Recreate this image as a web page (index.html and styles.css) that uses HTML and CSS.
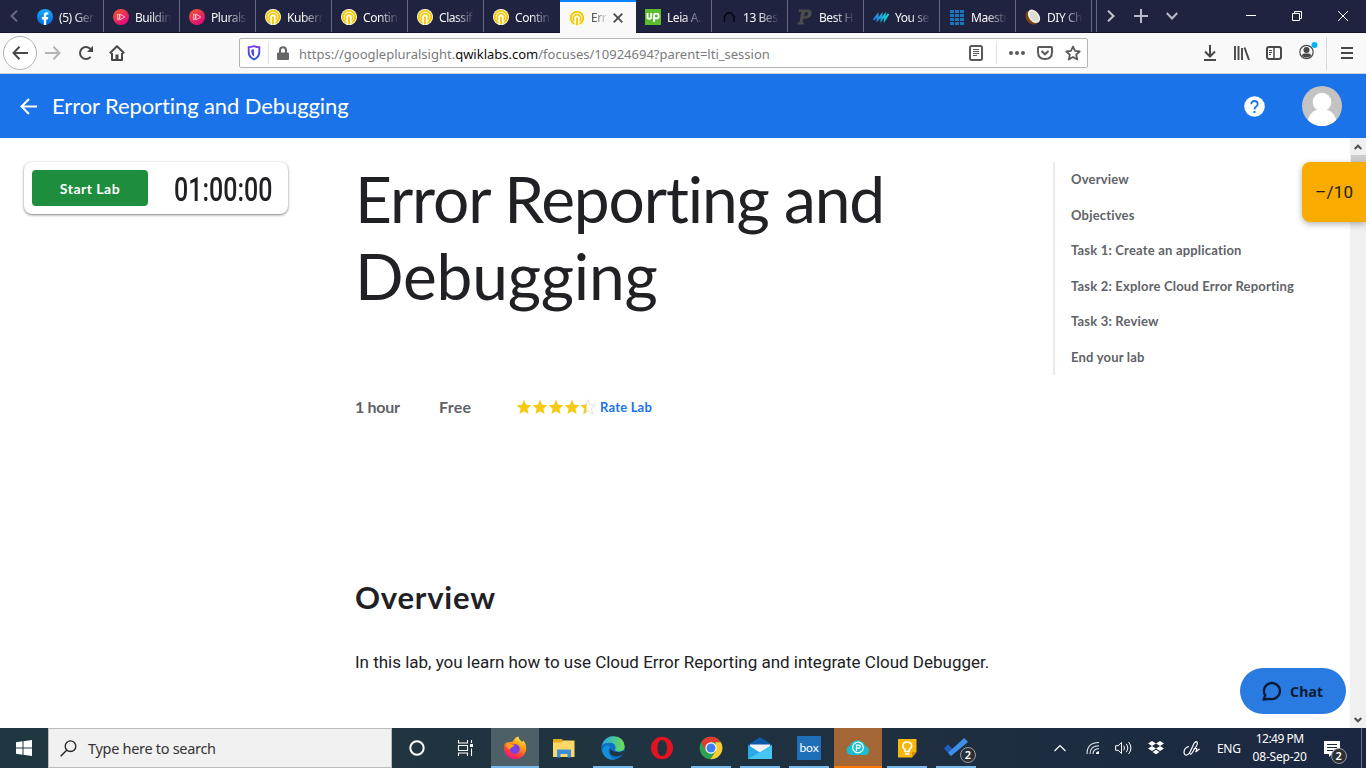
FILE: index.html
```html
<!DOCTYPE html>
<html lang="en">
<head>
<meta charset="utf-8">
<title>Error Reporting and Debugging</title>
<link rel="stylesheet" href="styles.css">
</head>
<body>
<svg class="defs" width="0" height="0">
  <symbol id="qwik" viewBox="0 0 16 16">
    <circle cx="8" cy="8" r="8" fill="#fff"/>
    <circle cx="8" cy="8" r="6.2" fill="none" stroke="#f5ca13" stroke-width="2.1"/>
    <path d="M5.700 11.200a3.700 3.700 0 1 1 4.600 0" fill="none" stroke="#f5ca13" stroke-width="1.800"/>
    <path d="M6.200 16V9.500M9.800 16V9.500" stroke="#fff" stroke-width="1.200"/>
    <path d="M8 7.400v7.800" stroke="#f5ca13" stroke-width="2"/>
  </symbol>
  <symbol id="plural" viewBox="0 0 16 16">
    <circle cx="8" cy="8" r="8" fill="url(#pg)"/>
    <path d="M6.800 5l5 3-5 3zM4.600 5.200v5.600l2-1.200V6.400z" fill="none" stroke="#fff" stroke-opacity=".75" stroke-width=".9"/>
  </symbol>
  <symbol id="star" viewBox="0 0 16 16"><path d="M8 .8l2.100 5 5.300.4-4 3.500 1.200 5.300L8 12.200 3.400 15l1.200-5.300-4-3.500 5.300-.4z"/></symbol>
  <defs>
    <linearGradient id="pg" x1="0" y1="0" x2=".7" y2="1"><stop offset="0" stop-color="#f15b2a"/><stop offset="1" stop-color="#e5087e"/></linearGradient>
    <linearGradient id="fb" x1="0" y1="0" x2="0" y2="1"><stop offset="0" stop-color="#19affb"/><stop offset="1" stop-color="#0063e0"/></linearGradient>
    <linearGradient id="shield" x1="0" y1="0" x2="0" y2="1"><stop offset="0" stop-color="#7a3df0"/><stop offset="1" stop-color="#2b52d8"/></linearGradient>
    <linearGradient id="fire" x1=".8" y1="0" x2=".3" y2="1"><stop offset="0" stop-color="#fff44f"/><stop offset=".4" stop-color="#ff980e"/><stop offset=".75" stop-color="#ff3647"/><stop offset="1" stop-color="#e31587"/></linearGradient>
    <linearGradient id="edgeTop" x1="0" y1="0" x2="1" y2="0"><stop offset="0" stop-color="#2aa8e6"/><stop offset="1" stop-color="#6adf4f"/></linearGradient>
    <linearGradient id="up" x1="0" y1="0" x2="1" y2="0"><stop offset="0" stop-color="#1f7bf0"/><stop offset="1" stop-color="#12d6c4"/></linearGradient>
  </defs>
</svg>

<header class="tabs">
  <div class="scroll-left"><svg width="8" height="12" viewBox="0 0 8 12"><path d="M7 .8L1.500 6 7 11.200" fill="none" stroke="#686b80" stroke-width="2"/></svg></div>
  <div class="tab"><svg width="16" height="16" viewBox="0 0 16 16"><circle cx="8" cy="8" r="8" fill="url(#fb)"/><path d="M6.800 16v-5.500H4.900V8.100h1.900V6.500c0-2.100 1.100-3.200 3-3.200l1.500.1v2h-1c-.9 0-1.100.5-1.100 1.200v1.500h2.100l-.4 2.400H9.200V16z" fill="#fff"/></svg><span>(5) Ger</span></div>
  <div class="tab"><svg width="16" height="16"><use href="#plural"/></svg><span>Buildin</span></div>
  <div class="tab"><svg width="16" height="16"><use href="#plural"/></svg><span>Plurals</span></div>
  <div class="tab"><svg width="16" height="16"><use href="#qwik"/></svg><span>Kuberr</span></div>
  <div class="tab"><svg width="16" height="16"><use href="#qwik"/></svg><span>Contin</span></div>
  <div class="tab"><svg width="16" height="16"><use href="#qwik"/></svg><span>Classif</span></div>
  <div class="tab last-dark"><svg width="16" height="16"><use href="#qwik"/></svg><span>Contin</span></div>
  <div class="tab active"><svg width="16" height="16"><use href="#qwik"/></svg><span>Err</span><svg class="close" width="10" height="10" viewBox="0 0 10 10"><path d="M.7.7l8.600 8.600M9.300.7L.7 9.300" stroke="#4a4a4c" stroke-width="1.800"/></svg></div>
  <div class="tab"><svg width="16" height="16" viewBox="0 0 16 16"><path d="M0 0h16v16H0z" fill="#5bbc2e"/><path d="M2.500 4v4q0 1.800 1.800 1.800T6.200 8V4M9 13V7q0-2.400 2.300-2.400T13.700 7t-2.300 2.400Q9.800 9.400 9 8.500" fill="none" stroke="#fff" stroke-width="1.900"/></svg><span>Leia A.</span></div>
  <div class="tab"><svg width="16" height="16" viewBox="0 0 16 16"><path d="M3.500 13V7.500L6.300 4h4L13 7.500V13" fill="none" stroke="#05060d" stroke-width="1.500"/></svg><span>13 Bes</span></div>
  <div class="tab"><svg width="16" height="16" viewBox="0 0 16 16"><path d="M2 .5h8q5 0 4.700 4-.5 5-6 5H6.500l-.8 3.700h1.200l-.4 2.300H.5l.5-2.300h1.300l2-10.300H1.600zM8.100 3L7.200 7.300h1.300q2.200 0 2.500-2.500.1-1.800-1.600-1.800z" fill="#4b4b4b"/></svg><span>Best H</span></div>
  <div class="tab"><svg width="16" height="16" viewBox="0 0 16 16"><path d="M.5 10.800l4-5v5l4-5v5l3.300-5v5l3.700-6" fill="none" stroke="url(#up)" stroke-width="1.900"/></svg><span>You se</span></div>
  <div class="tab"><svg width="16" height="16" viewBox="0 0 16 16"><path d="M1 1h4v3H1zM6 1h4v3H6zM11 1h4v3h-4zM1 5h4v3H1zM6 5h4v3H6zM11 5h4v3h-4zM1 9h4v3H1zM6 9h4v3H6zM11 9h4v3h-4zM1 13h4v3H1zM6 13h4v3H6zM11 13h4v3h-4z" fill="#1b75bc"/></svg><span>Maestr</span></div>
  <div class="tab"><svg width="16" height="16" viewBox="0 0 16 16"><ellipse cx="7" cy="8.600" rx="5.800" ry="7.600" transform="rotate(-38 7 8.600)" fill="#7a4310"/><ellipse cx="9" cy="7.300" rx="5.100" ry="7.500" transform="rotate(-38 9 7.300)" fill="#f7f2e8"/><ellipse cx="9.200" cy="7.500" rx="3.600" ry="6" transform="rotate(-38 9.200 7.500)" fill="#dedad4"/></svg><span>DIY Ch</span></div>
  <div class="tab-tools">
    <svg width="8" height="12" viewBox="0 0 8 12"><path d="M1 .8L6.500 6 1 11.200" fill="none" stroke="#c4c5cf" stroke-width="2"/></svg>
    <svg width="14" height="14" viewBox="0 0 14 14"><path d="M7 0v14M0 7h14" stroke="#b9bac6" stroke-width="2"/></svg>
    <svg width="12" height="8" viewBox="0 0 12 8"><path d="M.8 1L6 6.500 11.200 1" fill="none" stroke="#b9bac6" stroke-width="2"/></svg>
  </div>
  <div class="window-tools">
    <svg width="10" height="10" viewBox="0 0 10 10"><path d="M0 4.500h10" stroke="#fff"/></svg>
    <svg width="10" height="10" viewBox="0 0 10 10"><path d="M.5 2.500h7v7h-7zM2.500 2.500v-2h7v7h-2" fill="none" stroke="#fff"/></svg>
    <svg width="10" height="10" viewBox="0 0 10 10"><path d="M0 0l10 10M10 0L0 10" stroke="#fff"/></svg>
  </div>
</header>

<nav class="toolbar">
  <div class="back"><svg width="16" height="14" viewBox="0 0 16 14"><path d="M7.500.8L1.500 7l6 6.200M1.500 7H16" fill="none" stroke="#48484a" stroke-width="2"/></svg></div>
  <svg class="fwd" width="16" height="14" viewBox="0 0 16 14"><path d="M8.500.8l6 6.200-6 6.200M14.500 7H0" fill="none" stroke="#b5b5b6" stroke-width="2"/></svg>
  <svg class="reload" width="16" height="16" viewBox="0 0 16 16"><path d="M12.600 11.800A6 6 0 1 1 12.500 4" fill="none" stroke="#48484a" stroke-width="2"/><path d="M15 .8V7H9z" fill="#48484a"/></svg>
  <svg class="home" width="16" height="16" viewBox="0 0 16 16"><path d="M.8 8.300L8 1.300l7.200 7M3 8v7h10V8" fill="none" stroke="#48484a" stroke-width="2" stroke-linejoin="round"/><path d="M6.500 14.500V9.500h3v5z" fill="#48484a"/></svg>
  <div class="urlbar">
    <svg class="ic-shield" width="14" height="16" viewBox="0 0 14 16"><path d="M7 1.200q3 1 5.300 1V7q0 5-5.300 7.500Q1.700 12 1.700 7V2.200q2.300 0 5.300-1z" fill="none" stroke="url(#shield)" stroke-width="1.900"/><path d="M7 4.200V11.500Q4.300 10 4.300 7V4.800z" fill="#4a4be8"/></svg>
    <i class="bar"></i>
    <svg class="ic-lock" width="12" height="14" viewBox="0 0 12 14"><path d="M3 7V4.300Q3 1.200 6 1.200T9 4.300V7" fill="none" stroke="#666" stroke-width="2"/><rect y="6.500" width="12" height="7.500" rx="1" fill="#666"/></svg>
    <span class="url">https://googlepluralsight.<b>qwiklabs.com</b>/focuses/10924694?parent=lti_session</span>
    <svg class="ic-reader" width="14" height="16" viewBox="0 0 14 16"><rect x="1" y="1" width="12" height="14" rx="1.500" fill="none" stroke="#5a5a5c" stroke-width="2"/><path d="M4 4.500h6M4 6.500h6M4 8.500h6M4 10.500h4" stroke="#5a5a5c"/></svg>
    <i class="bar"></i>
    <svg class="ic-dots" width="16" height="4" viewBox="0 0 16 4"><g fill="#5a5a5c"><circle cx="2" cy="2" r="2"/><circle cx="8" cy="2" r="2"/><circle cx="14" cy="2" r="2"/></g></svg>
    <svg class="ic-pocket" width="16" height="14" viewBox="0 0 16 14"><path d="M2 1h12q1 0 1 1v4q0 7-7 7T1 6V2q0-1 1-1z" fill="none" stroke="#5a5a5c" stroke-width="2"/><path d="M4.500 5L8 8.300 11.500 5" fill="none" stroke="#5a5a5c" stroke-width="2"/></svg>
    <svg width="16" height="16" viewBox="0 0 16 16"><path d="M8 1.500l2 4.400 4.700.6-3.500 3.200 1 4.800L8 12l-4.200 2.500 1-4.800L1.300 6.500 6 5.900z" fill="none" stroke="#5a5a5c" stroke-width="1.800" stroke-linejoin="round"/></svg>
  </div>
  <div class="nav-right">
    <svg width="14" height="16" viewBox="0 0 14 16"><path d="M7 0v11M2 6.500l5 5 5-5M1 15h12" fill="none" stroke="#48484a" stroke-width="2"/></svg>
    <svg width="16" height="14" viewBox="0 0 16 14"><path d="M1 0v14M4.500 0v14M8 2v12M10.500 1.500L15 14" stroke="#48484a" stroke-width="1.900"/></svg>
    <svg width="16" height="14" viewBox="0 0 16 14"><rect x="1" y="1" width="14" height="12" rx="2" fill="none" stroke="#48484a" stroke-width="2"/><path d="M8 1v12" stroke="#48484a" stroke-width="1.500"/><path d="M3 4.500h3M3 6.500h3M3 8.500h2" stroke="#48484a"/></svg>
    <svg class="account" width="20" height="18" viewBox="0 0 20 18"><circle cx="7.500" cy="10" r="6.700" fill="none" stroke="#48484a" stroke-width="1.200"/><circle cx="7.500" cy="8" r="3" fill="#48484a"/><path d="M3 14q0-2.500 2.500-2.500h4Q12 11.500 12 14q-4.500 3-9 0z" fill="#48484a"/><circle cx="15.500" cy="3" r="3" fill="#00b3f4"/></svg>
    <i></i>
    <svg width="12" height="12" viewBox="0 0 12 12"><path d="M0 1h12M0 6h12M0 11h12" stroke="#48484a" stroke-width="2"/></svg>
  </div>
</nav>

<div class="appbar">
  <svg width="17" height="17" viewBox="0 0 17 17"><path d="M9 1L1.500 8.500 9 16M1.500 8.500H17" fill="none" stroke="#fff" stroke-width="2"/></svg>
  <span class="app-title">Error Reporting and Debugging</span>
  <svg class="help" width="21" height="21" viewBox="0 0 21 21"><circle cx="10.500" cy="10.500" r="10.300" fill="#fff"/><path d="M7.300 8.300Q7.300 5 10.500 5t3.200 3q0 1.300-1.500 2.500-1.700 1.300-1.700 3" fill="none" stroke="#1a73e8" stroke-width="1.800"/><path d="M10.500 15v2" stroke="#1a73e8" stroke-width="2"/></svg>
  <svg class="avatar" width="40" height="40" viewBox="0 0 40 40"><circle cx="20" cy="20" r="20" fill="#c3c3c3"/><circle cx="20" cy="16" r="9.300" fill="#fff"/><path d="M5.800 34Q8 26.500 14 24h12q6 2.500 8.200 10Q28 40 20 40T5.800 34z" fill="#fff"/></svg>
</div>

<main class="page">
  <aside class="left"><div class="lab-card"><button class="start">Start Lab</button><span class="timer">01:00:00</span></div></aside>
  <section class="content">
    <h1><span class="line-first">Error Reporting and</span><br><span class="line-last">Debugging</span></h1>
    <div class="meta"><span class="hour">1 hour</span><span class="free">Free</span>
      <span class="stars">
        <svg width="16" height="16"><use href="#star" fill="#f5ca13"/></svg><svg width="16" height="16"><use href="#star" fill="#f5ca13"/></svg><svg width="16" height="16"><use href="#star" fill="#f5ca13"/></svg><svg width="16" height="16"><use href="#star" fill="#f5ca13"/></svg><svg width="16" height="16"><clipPath id="part"><rect width="6.500" height="16"/></clipPath><use href="#star" fill="#fff" stroke="#dcdcdc" stroke-width=".8"/><use href="#star" fill="#f5ca13" clip-path="url(#part)"/></svg>
      </span><a class="rate">Rate Lab</a></div>
    <h2>Overview</h2>
    <p>In this lab, you learn how to use Cloud Error Reporting and integrate Cloud Debugger.</p>
  </section>
  <ul class="toc">
    <li>Overview</li><li>Objectives</li><li>Task 1: Create an application</li><li>Task 2: Explore Cloud Error Reporting</li><li>Task 3: Review</li><li>End your lab</li>
  </ul>
  <div class="scrollbar">
    <svg width="8" height="6" viewBox="0 0 8 6"><path d="M.7 5L4 1.700 7.300 5" fill="none" stroke="#505050" stroke-width="2"/></svg>
    <i></i>
    <svg width="8" height="6" viewBox="0 0 8 6"><path d="M.7 1L4 4.300 7.300 1" fill="none" stroke="#505050" stroke-width="2"/></svg>
  </div>
  <div class="score">–/10</div>
  <div class="chat"><svg width="20" height="20" viewBox="0 0 20 20"><path d="M1.500 18.500l1.800-4A8 8 0 1 1 8 17.800z" fill="none" stroke="#0b1a33" stroke-width="2.300" stroke-linejoin="round"/></svg><span>Chat</span></div>
</main>

<footer class="taskbar">
  <div class="win"><svg width="16" height="16" viewBox="0 0 16 16"><path d="M0 2.200L6.500 1.300V7.500H0zM7.500 1.200L16 0v7.500H7.500zM0 8.500h6.500v6.200L0 13.800zM7.500 8.500H16V16l-8.500-1.200z" fill="#fff"/></svg></div>
  <div class="search"><svg width="17" height="17" viewBox="0 0 17 17"><circle cx="10.500" cy="6.200" r="5.300" fill="none" stroke="#222" stroke-width="1.300"/><path d="M6.700 10.200L.7 16.300" stroke="#222" stroke-width="1.400"/></svg><span>Type here to search</span></div>
  <div class="apps">
    <div class="app"><svg width="24" height="24" viewBox="0 0 24 24"><circle cx="12" cy="12" r="6.700" fill="none" stroke="#fff" stroke-width="2"/></svg></div>
    <div class="app"><svg width="24" height="24" viewBox="0 0 24 24"><path d="M4.500 4v3h9V4M4.500 20v-3h9v3M4.500 9.500h9v5h-9zM17.500 4v3M17.500 12.500V20" fill="none" stroke="#fff" stroke-width="1.100"/><path d="M16 8h3v3h-3z" fill="#fff"/></svg></div>
    <div class="app current"><svg width="24" height="24" viewBox="0 0 24 24"><path d="M2 7Q4 9 5 6q3 0 5-.5Q12 1 15.500.5q0 3 3 5 1.500.5 2-1Q23.500 8 23.200 13A11.200 11.200 0 1 1 2 7z" fill="url(#fire)"/><circle cx="11.800" cy="13" r="5" fill="#7542e5"/><path d="M3 6.500q3 0 5 2 2-.5 4 1-2 .5-3 2-2 0-2 2-4-1-4-7z" fill="#ff9f1c"/></svg></div>
    <div class="app"><svg width="24" height="24" viewBox="0 0 24 24"><path d="M1 3h9l1 2h11v16H1z" fill="#e8a820"/><path d="M1 6.500h9l1-2h11.500V21H1z" fill="#ffd868"/><path d="M5 21.500v-8h14v8h-3.500v-3.500h-7v3.500z" fill="#3a8edb"/></svg></div>
    <div class="app open"><svg width="24" height="24" viewBox="0 0 24 24"><circle cx="12" cy="12" r="11.700" fill="#0f6fc6"/><path d="M1 9Q4 .3 12.500.3q10.500.5 11.200 10.200-.2 4.500-5.200 5-6-.3-4-3.300.5-5-5-5.500Q4 6.600 1 9z" fill="url(#edgeTop)"/><path d="M9 12q-2 7 5 8.500 4 .5 8-2.500l2-2.500-2-.5q-3 1.500-5.500 1Q11 16 9 12z" fill="#203543"/><path d="M9.200 11.500q-3 3-.7 7Q10.500 22.500 15 23 8 25 4 20.500-.8 15 3 11q4-3 6.200.5z" fill="#1390d8"/></svg></div>
    <div class="app"><svg width="24" height="24" viewBox="0 0 24 24"><path fill-rule="evenodd" d="M12 .8A11 11.200 0 1 1 12 23.200 11 11.200 0 1 1 12 .8zM12 4c-3.200 0-4.500 3.700-4.500 8s1.300 8 4.500 8 5-3.700 5-8-1.800-8-5-8z" fill="#e3131f"/></svg></div>
    <div class="app open"><svg width="24" height="24" viewBox="0 0 24 24"><circle cx="12" cy="12" r="11.300" fill="#2fa24f"/><path d="M2.200 6.300A11.300 11.300 0 0 1 21.800 6.300H12L7 15z" fill="#df3b30"/><path d="M21.800 6.300A11.300 11.300 0 0 1 11.500 23.300L17 15 16.500 6.300z" fill="#fcca31"/><circle cx="12" cy="12" r="5.700" fill="#fff"/><circle cx="12" cy="12" r="4.500" fill="#3e7ff0"/></svg></div>
    <div class="app open"><svg width="24" height="24" viewBox="0 0 24 24"><path d="M0 9L12 1l12 8v5H0z" fill="#0c5ba8"/><path d="M2 8.500h20v8H2z" fill="#f2f4f6"/><path d="M0 9v14h24V9l-12 7.500z" fill="#2aa9e8"/><path d="M0 23L24 9v14z" fill="#45c6f5"/></svg></div>
    <div class="app open"><div class="box">box</div></div>
    <div class="app alert"><svg width="24" height="24" viewBox="0 0 24 24"><path d="M5 19a4.700 4.700 0 0 1-1-9.200Q5 5 11.500 4.500 18 4.500 19.300 10A4.700 4.700 0 0 1 20 19z" fill="#18bfcf"/><circle cx="12" cy="11.500" r="5.300" fill="none" stroke="#fff" stroke-width="1.200"/><path d="M10.500 15V9.200h2.200q1.500 0 1.500 1.500t-1.500 1.500h-2" fill="none" stroke="#fff" stroke-width="1.300"/></svg></div>
    <div class="app open"><svg width="24" height="24" viewBox="0 0 24 24"><path d="M3 3h18.500v13l-4.500 5.500H3z" fill="#f8b70a"/><path d="M21.500 16L17 21.500V16z" fill="#d48d00"/><path d="M10 15.500v-2Q7.500 12 7.800 9.300 8.300 6 12.200 6t4.400 3.300q.2 2.700-2.300 4.200v2z" fill="none" stroke="#fff" stroke-width="1.600"/><path d="M10 18h4.300" stroke="#fff" stroke-width="1.600"/></svg></div>
    <div class="app open todo"><svg width="24" height="24" viewBox="0 0 24 24"><path d="M0 12.500l4-4 7 7-4 4.500z" fill="#1f5fbf"/><path d="M7 20L24 6l-3.800-4L4 16.800z" fill="#3f8fe8"/></svg><span class="badge">2</span></div>
  </div>
  <div class="tray">
    <svg width="12" height="8" viewBox="0 0 12 8"><path d="M.5 7L6 1.500 11.500 7" fill="none" stroke="#fff" stroke-width="1.200"/></svg>
    <svg class="wifi" width="14" height="14" viewBox="0 0 14 14"><path d="M1 13Q1 1.500 13 1.500M4 13Q4 4.700 13 4.700M7 13Q7 7.700 13 7.700" fill="none" stroke="#e4e8ec" stroke-width="1.100"/><path d="M10 13q0-2.700 3-2.700V13z" fill="#fff"/></svg>
    <svg class="vol" width="17" height="14" viewBox="0 0 17 14"><path d="M.6 4.700h2.600L6.500 1.500v11L3.200 9.300H.6zM8.700 4.700q1.800 2.300 0 4.600M11.200 2.800q3.200 4.200 0 8.400M13.600 1q4.700 6 0 12" fill="none" stroke="#fff" stroke-width="1"/></svg>
    <svg class="drop" width="16" height="14" viewBox="0 0 16 14"><path d="M4 0l4 2.500L4 5 0 2.500zM12 0l4 2.500L12 5 8 2.500zM4 5l4 2.500-4 2.500-4-2.500zM12 5l4 2.500-4 2.500-4-2.500zM8 8.800l3.500 2.300L8 13.300l-3.500-2.200z" fill="#fff"/></svg>
    <svg class="pen" width="17" height="17" viewBox="0 0 17 17"><path d="M6 6.500q-5 1-5 6 .3 3 3 2.500 2-.5 3-3l4-8.500q1.800-2.500 3-1.500 1 1.200-.3 3.500L9 13q-1.500 2-2 .5M10.500 9.500q1.500-1.500 3-1 1 1-1 3.500 2-1.500 4-3" fill="none" stroke="#fff" stroke-width="1.200"/></svg>
    <span class="lang">ENG</span>
    <div class="clock"><span class="time">12:49 PM</span><span class="date">08-Sep-20</span></div>
    <div class="notif"><svg width="16" height="16" viewBox="0 0 16 16"><path d="M0 0h16v13H8l-3 3v-3H0z" fill="#fff"/><path d="M3 3.500h10M3 6.500h10M3 9.500h6" stroke="#1b2940"/></svg><span class="badge">2</span></div>
    <i></i>
  </div>
</footer>
</body>
</html>
```
FILE: styles.css
```css
* { box-sizing: border-box; }
body { margin: 0; width: 1366px; height: 768px; overflow: hidden; display: flex; flex-direction: column; background: #fff; font-family: "Lato", sans-serif; color: #202124; position: relative; }
svg { display: block; flex: none; }
.defs { position: absolute; }

.tabs { height: 33px; flex: none; display: flex; background: #202340; border-bottom: 1px solid #14162b; font: 12px "Noto Sans", sans-serif; color: #f9f9fa; }
.scroll-left { width: 28px; display: flex; align-items: center; padding-left: 10px; }
.tab { width: 76px; flex: none; display: flex; align-items: center; padding: 2px 0 0 9px; gap: 6px; border-right: 1px solid #676a7d; }
.tab span { width: 44px; flex: none; white-space: nowrap; letter-spacing: -.45px; -webkit-mask-image: linear-gradient(90deg, #000 35%, transparent 82%); mask-image: linear-gradient(90deg, #000 35%, transparent 82%); }
.last-dark { border-right-color: #202340; }
.active { background: #f9f9fa; border-top: 2px solid #0a84ff; border-right: 0; color: #333; height: 33px; padding-top: 0; }
.active span { width: 20px; -webkit-mask-image: linear-gradient(90deg, #000, transparent 90%); mask-image: linear-gradient(90deg, #000, transparent 90%); }
.active .close { margin-left: -4px; }
.tab-tools { width: 82px; margin-left: 4px; border-left: 1px solid #676a7d; display: flex; align-items: center; justify-content: space-between; padding-left: 10px; flex: none; }
.window-tools { display: flex; align-items: center; gap: 36px; margin-left: 68px; }

.toolbar { height: 41px; flex: none; background: #f9f9fa; border-bottom: 1px solid #d0d0d2; display: flex; align-items: center; }
.back { width: 34px; height: 34px; margin-left: 3px; border: 1px solid #b1b1b3; border-radius: 50%; background: #fff; display: flex; align-items: center; justify-content: center; }
.fwd { margin-left: 8px; }
.reload { margin-left: 17px; }
.home { margin-left: 15px; }
.urlbar { width: 849px; height: 30px; margin-left: 114px; background: #fff; border: 1px solid #b4b4b6; border-radius: 2px; display: flex; align-items: center; padding: 0 6px 0 7px; }
.bar { width: 1px; height: 22px; background: #dededf; }
.ic-shield { margin-right: 7px; }
.ic-lock { margin: 0 10px 0 8px; }
.url { flex: 1; font: 13px "Noto Sans", sans-serif; color: #7b7b7d; white-space: nowrap; padding-top: 2px; }
.url b { font-weight: 400; color: #0c0c0d; }
.ic-reader { margin-right: 13px; }
.ic-dots { margin: 0 12px; }
.ic-pocket { margin-right: 12px; }
.nav-right { flex: 1; display: flex; align-items: center; gap: 16px; margin-left: 115px; }
.nav-right svg:nth-child(2) { margin-left: 1px; }
.nav-right .account { margin: -5px -5px 0 1px; }
.nav-right i { width: 1px; height: 33px; background: #dadadb; margin: 0 -2px 0 -4px; }

.appbar { height: 64px; flex: none; background: #1a73e8; display: flex; align-items: center; padding: 0 24px 0 20px; color: #fff; }
.app-title { font-size: 22px; letter-spacing: -.1px; margin-left: 15px; flex: 1; padding-bottom: 2px; }
.help { margin-right: 37px; }

.page { flex: 1; min-height: 0; display: flex; position: relative; }
.left { width: 355px; padding: 24px 0 0 24px; }
.lab-card { width: 264px; height: 52px; border-radius: 8px; padding: 8px; display: flex; align-items: center; box-shadow: 0 1px 2px rgba(60,64,67,.5), 0 1px 3px 1px rgba(60,64,67,.15); }
.start { flex: none; width: 116px; height: 36px; padding: 0; border: 0; border-radius: 4px; background: #1e8e3e; color: #fff; font: 700 14px "Lato", sans-serif; letter-spacing: .5px; }
.timer { flex: none; width: 96px; white-space: nowrap; font: 500 34px "Roboto", sans-serif; margin-left: 26px; transform: scaleX(.735); transform-origin: left; padding-top: 2px; }
.content { width: 698px; }
h1 { margin: 23px 0 0; font-size: 64px; line-height: 76.500px; font-weight: 400; height: 153px; }
.line-first { letter-spacing: -1.120px; }
.line-last { letter-spacing: -.200px; }
.meta { display: flex; align-items: center; height: 20px; margin-top: 83px; font-size: 16px; font-weight: 700; color: #5f6368; }
.hour { width: 84px; letter-spacing: -.300px; padding-bottom: 2px; }
.free { width: 33px; letter-spacing: .300px; padding-bottom: 2px; }
.stars { display: flex; margin-left: 44px; }
.rate { font-size: 13px; color: #1a73e8; margin-left: 4px; letter-spacing: .200px; padding-bottom: 1px; }
h2 { margin: 157px 0 0; font-size: 31px; line-height: 46px; font-weight: 700; letter-spacing: .800px; }
p { margin: 30px 0 0; font: 17px/24px "Roboto", sans-serif; letter-spacing: -.010px; }
.toc { list-style: none; margin: 24px 0 0; padding: 0 0 0 16px; border-left: 2px solid #e8eaed; width: 297px; height: 213px; font-size: 13px; font-weight: 700; letter-spacing: .190px; color: #5f6368; }
.toc li { height: 35.500px; line-height: 35.500px; white-space: nowrap; }
.scrollbar { width: 16px; background: #f0f0f0; display: flex; flex-direction: column; align-items: center; padding: 6px 0 5px; }
.scrollbar i { width: 15px; height: 22px; margin-top: 5px; margin-bottom: auto; background: #cdcdcd; }
.score { position: absolute; right: 0; top: 24px; width: 64px; height: 60px; padding-left: 13px; line-height: 61px; letter-spacing: .300px; background: #f9ab00; border-radius: 8px 0 0 8px; font-family: "Roboto", sans-serif; font-size: 17px; box-shadow: 0 2px 6px rgba(60,64,67,.4); }
.chat { position: absolute; right: 20px; top: 530px; width: 106px; height: 46px; border-radius: 23px; background: #2a7be1; display: flex; align-items: center; padding-left: 22px; gap: 8px; font: 700 14px "Noto Sans", sans-serif; letter-spacing: .200px; color: #0b1a33; }

.taskbar { height: 40px; flex: none; display: flex; background: linear-gradient(90deg, #1f3740, #203340 50%, #1b2741); color: #fff; font-family: "Noto Sans", sans-serif; }
.win { width: 48px; display: flex; align-items: center; justify-content: center; }
.search { width: 344px; background: #f1f1f1; border: 1px solid #b9bcbe; color: #333; display: flex; align-items: center; padding-left: 11px; gap: 11px; font-size: 14.500px; letter-spacing: -.300px; }
.apps { display: flex; gap: 1px; margin-left: 1px; }
.app { width: 48px; height: 40px; display: flex; align-items: center; justify-content: center; position: relative; }
.current { background: #4d6068; border-bottom: 2px solid #76b9ed; padding-top: 2px; }
.open::after { content: ""; position: absolute; left: 4px; right: 4px; bottom: 0; height: 2px; background: #76b9ed; }
.alert { background: #a56636; border-bottom: 2px solid #ff7600; padding-top: 2px; }
.box { width: 24px; height: 24px; background: #1d70b8; font: 400 12px/23px "Lato", sans-serif; text-align: center; }
.badge { position: absolute; width: 16px; height: 16px; border-radius: 50%; background: #2c2f34; border: 1px solid #9a9da1; font: 600 11px/14px "Noto Sans", sans-serif; text-align: center; color: #fff; }
.todo .badge { left: 28px; top: 19px; }
.tray { flex: 1; display: flex; align-items: center; padding-left: 74px; font-size: 12px; }
.wifi { margin-left: 20px; }
.vol { margin-left: 15px; }
.drop { margin-left: 16px; }
.pen { margin-left: 19px; }
.lang { margin-left: 17px; letter-spacing: -.300px; }
.clock { width: 54px; margin-left: 12px; display: flex; flex-direction: column; align-items: center; line-height: 18px; white-space: nowrap; }
.time { letter-spacing: -.500px; }
.date { letter-spacing: -.200px; }
.notif { position: relative; margin: 1px 0 0 17px; }
.notif .badge { left: 7px; top: 7px; }
.tray > i { width: 1px; height: 40px; background: #67717f; margin-left: auto; margin-right: 4px; }
```
